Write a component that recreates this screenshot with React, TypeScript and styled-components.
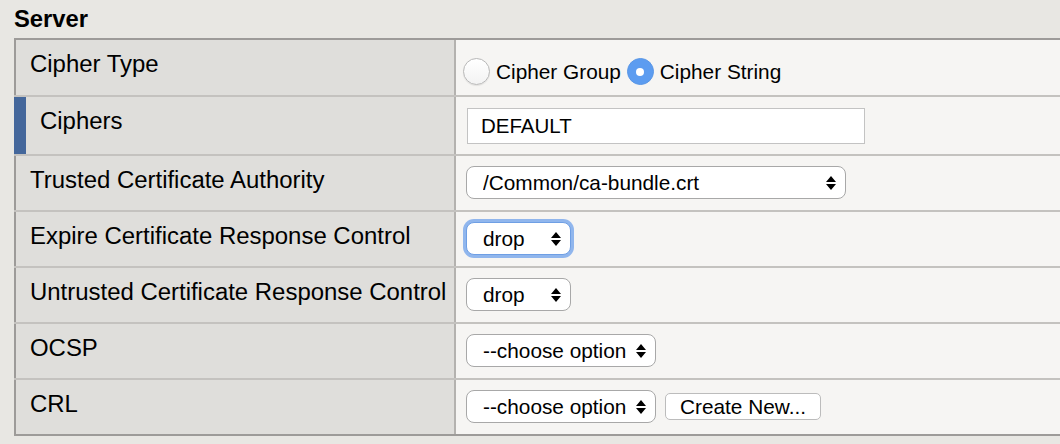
import React from 'react';
import styled, { createGlobalStyle, css } from 'styled-components';

const GlobalStyle = createGlobalStyle`
  html, body {
    margin: 0;
    padding: 0;
    background: #e8e7e3;
    overflow: hidden;
  }
  body {
    font-family: "Liberation Sans", Arial, Helvetica, sans-serif;
    color: #000;
  }
`;

const Page = styled.div`
  width: 1060px;
  height: 444px;
  padding-left: 14px;
  box-sizing: border-box;
`;

const Title = styled.h2`
  margin: 0;
  padding-top: 5px;
  margin-bottom: 6px;
  font-size: 23.8px;
  line-height: 27px;
  font-weight: bold;
`;

const Table = styled.div`
  width: 1080px;
  border-top: 2px solid #9d9b99;
  border-bottom: 2px solid #9d9b99;
`;

const Row = styled.div`
  display: flex;
  min-height: 54px;
  border-bottom: 2px solid #c4c2bf;

  &:last-child {
    border-bottom: none;
  }
`;

const Label = styled.div<{ $marked?: boolean }>`
  box-sizing: border-box;
  width: 442px;
  flex-shrink: 0;
  background: #dfdedb;
  border-left: ${({ $marked }) => ($marked ? '12px solid #44679b' : '2px solid #9d9b99')};
  border-right: 2px solid #b4b2af;
  padding: 10px 0 0 14px;
  font-size: 23.95px;
  line-height: 27px;
  white-space: nowrap;
`;

const Value = styled.div<{ $top?: number }>`
  flex: 1;
  background: #f6f5f3;
  padding: ${({ $top = 10 }) => `${$top}px 10px 10px 10px`};
  display: flex;
  align-items: flex-start;
  gap: 9px;
  font-size: 20.8px;
`;

const RadioGroup = styled.div`
  display: flex;
  align-items: center;
  margin-left: -3px;
`;

const RadioOption = styled.label`
  display: flex;
  align-items: center;
  gap: 6px;
  margin-right: 6px;
  line-height: 24px;
`;

const RadioDot = styled.span<{ $checked?: boolean }>`
  box-sizing: border-box;
  width: 27px;
  height: 27px;
  border-radius: 50%;
  position: relative;
  ${({ $checked }) =>
    $checked
      ? css`
          background: #5c9cf0;
          border: 1px solid #5a97e6;
          &::after {
            content: '';
            position: absolute;
            left: 50%;
            top: 50%;
            width: 8px;
            height: 8px;
            margin: -4px 0 0 -4px;
            border-radius: 50%;
            background: #fff;
          }
        `
      : css`
          background: linear-gradient(#ffffff, #f3f3f3);
          border: 1px solid #b8b8b8;
          box-shadow: 0 1px 1px rgba(0, 0, 0, 0.08);
        `}
`;

const TextInput = styled.input`
  box-sizing: border-box;
  width: 398px;
  height: 36px;
  margin-left: 1px;
  border: 1px solid #c3c3c3;
  background: #fff;
  padding: 0 0 0 13px;
  font-family: inherit;
  font-size: 20.5px;
  color: #000;
  outline: none;
`;

const SelectWrap = styled.div<{ $width: number; $focused?: boolean }>`
  position: relative;
  box-sizing: border-box;
  width: ${({ $width }) => $width}px;
  height: 33px;
  border: 1.5px solid #a8a8a8;
  border-radius: 8px;
  background: #fff;
  ${({ $focused }) =>
    $focused &&
    css`
      border-color: #6f9fe4;
      box-shadow: 0 0 0 3px rgba(110, 160, 235, 0.75);
    `}
`;

const NativeSelect = styled.select`
  appearance: none;
  -webkit-appearance: none;
  width: 100%;
  height: 100%;
  border: none;
  background: transparent;
  padding: 0 0 0 16px;
  font-family: "Liberation Sans", Arial, Helvetica, sans-serif;
  font-size: 20.8px;
  color: #000;
  outline: none;
`;

const Arrows = styled.svg`
  position: absolute;
  right: 9px;
  top: 50%;
  margin-top: -7px;
  pointer-events: none;
`;

const Button = styled.button`
  box-sizing: border-box;
  height: 27px;
  width: 156px;
  margin-top: 3px;
  border: 1px solid #bcbcbc;
  border-radius: 5px;
  background: #fff;
  font-family: "Liberation Sans", Arial, Helvetica, sans-serif;
  font-size: 20.8px;
  color: #000;
  padding: 0;
  line-height: 25px;
`;

type SelectProps = { value: string; width: number; focused?: boolean };

const Select: React.FC<SelectProps> = ({ value, width, focused }) => (
  <SelectWrap $width={width} $focused={focused}>
    <NativeSelect defaultValue={value}>
      <option value={value}>{value}</option>
    </NativeSelect>
    <Arrows width="10" height="14" viewBox="0 0 10 14">
      <path d="M0 6 L5 0 L10 6 Z M0 8 L10 8 L5 14 Z" fill="#000" />
    </Arrows>
  </SelectWrap>
);

const App: React.FC = () => {
  return (
    <Page>
      <GlobalStyle />
      <Title>Server</Title>
      <Table>
        <Row>
          <Label>Cipher Type</Label>
          <Value $top={18}>
            <RadioGroup>
              <RadioOption>
                <RadioDot />
                Cipher Group
              </RadioOption>
              <RadioOption>
                <RadioDot $checked />
                Cipher String
              </RadioOption>
            </RadioGroup>
          </Value>
        </Row>
        <Row>
          <Label $marked>Ciphers</Label>
          <Value $top={11}>
            <TextInput defaultValue="DEFAULT" />
          </Value>
        </Row>
        <Row>
          <Label>Trusted Certificate Authority</Label>
          <Value>
            <Select value="/Common/ca-bundle.crt" width={380} />
          </Value>
        </Row>
        <Row>
          <Label>Expire Certificate Response Control</Label>
          <Value>
            <Select value="drop" width={105} focused />
          </Value>
        </Row>
        <Row>
          <Label>Untrusted Certificate Response Control</Label>
          <Value>
            <Select value="drop" width={105} />
          </Value>
        </Row>
        <Row>
          <Label>OCSP</Label>
          <Value>
            <Select value="--choose option" width={190} />
          </Value>
        </Row>
        <Row>
          <Label>CRL</Label>
          <Value>
            <Select value="--choose option" width={190} />
            <Button>Create New...</Button>
          </Value>
        </Row>
      </Table>
    </Page>
  );
};

export default App;
